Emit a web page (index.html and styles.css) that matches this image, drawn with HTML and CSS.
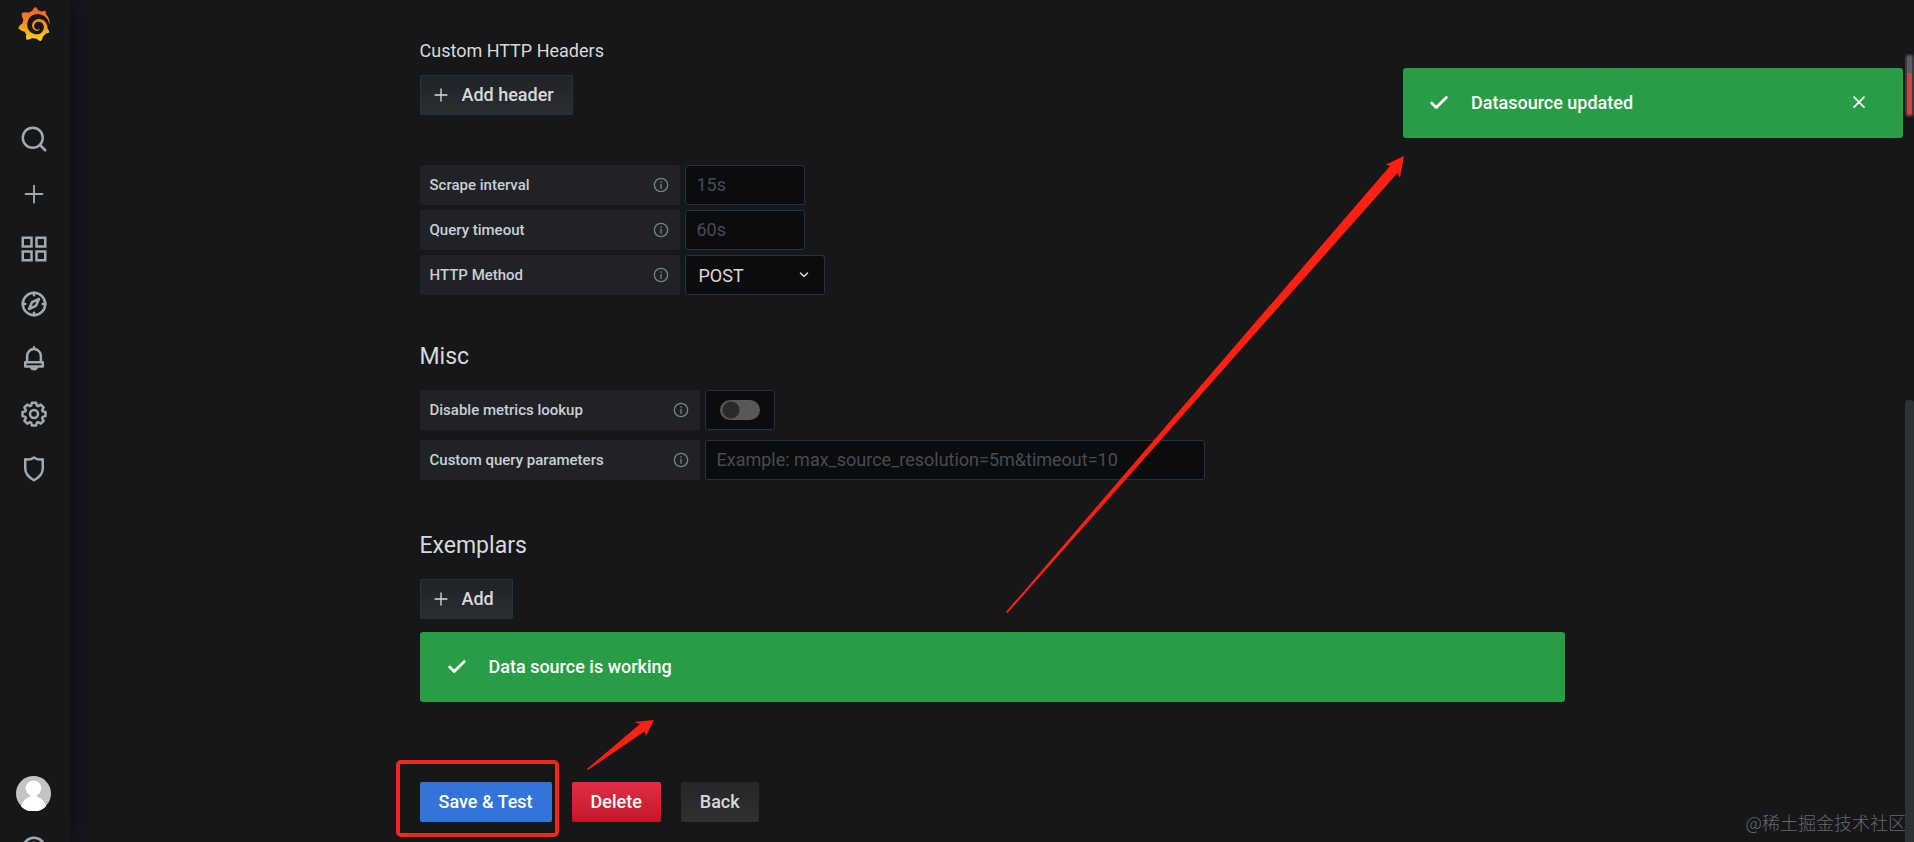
FILE: index.html
```html
<!DOCTYPE html>
<html lang="en">
<head>
  <meta charset="UTF-8" />
  <meta name="viewport" content="width=device-width, initial-scale=1.0"/>
  <title>Data Sources - Grafana</title>
  <link rel="stylesheet" href="styles.css">
</head>
<body>
  <!-- Shared icons -->
  <svg class="sprite" aria-hidden="true">
    <symbol id="plus" viewBox="0 0 24 24"><path d="M12 3v18M3 12h18"/></symbol>
    <symbol id="info" viewBox="0 0 24 24"><circle cx="12" cy="12" r="10"/><path d="M12 11v6M12 7v1"/></symbol>
    <symbol id="check" viewBox="0 0 24 24"><path d="M4 12l5 5L20 6"/></symbol>
    <symbol id="close" viewBox="0 0 24 24"><path d="M6 5l12 12M18 5L6 17"/></symbol>
  </svg>

  <nav class="sidemenu">
    <a href="#" class="logo" aria-label="Home">
      <svg viewBox="0 0 24 24">
        <defs>
          <linearGradient id="flame" x1="0" y1="1" x2="0" y2="0">
            <stop offset="0" stop-color="#fcd21f"/>
            <stop offset="0.35" stop-color="#fba41c"/>
            <stop offset="1" stop-color="#f05a28"/>
          </linearGradient>
        </defs>
        <path fill="url(#flame)" d="M23.02 10.59a8.578 8.578 0 0 0-.862-3.034 8.911 8.911 0 0 0-1.789-2.445c.337-1.342-.413-2.505-.413-2.505-1.292-.08-2.113.4-2.416.62-.052-.02-.102-.044-.154-.064-.22-.089-.446-.172-.677-.247-.231-.073-.47-.14-.711-.197a9.867 9.867 0 0 0-.875-.161C14.557.753 12.94 0 12.94 0c-1.804 1.145-2.147 2.744-2.147 2.744l-.018.093c-.098.029-.2.057-.298.088-.138.042-.275.094-.413.143-.138.055-.275.107-.41.166a8.869 8.869 0 0 0-1.557.87l-.063-.029c-2.497-.955-4.716.195-4.716.195-.203 2.658.996 4.33 1.235 4.636a11.608 11.608 0 0 0-.607 2.635C1.636 12.684 1 15.014 1 15.014c1.926 2.214 4.171 2.351 4.171 2.351.003-.002.006-.002.006-.005.285.509.615.994.986 1.446.156.19.32.371.488.548-.704 2.009.099 3.68.099 3.68 2.144.08 3.553-.937 3.849-1.173a9.784 9.784 0 0 0 3.164.501h.08l.055-.003.107-.002.103-.005.003.002c1.01 1.44 2.788 1.646 2.788 1.646 1.264-1.332 1.337-2.653 1.337-2.94v-.058c0-.02-.003-.039-.003-.06.265-.187.52-.387.758-.6a7.875 7.875 0 0 0 1.415-1.7c1.43.083 2.437-.885 2.437-.885-.236-1.49-1.085-2.216-1.264-2.354l-.018-.013-.016-.013a.217.217 0 0 1-.031-.02c.008-.092.016-.18.02-.27.011-.162.016-.323.016-.48v-.253l-.005-.098-.008-.135a1.891 1.891 0 0 0-.01-.13c-.003-.042-.008-.083-.013-.125l-.016-.124-.018-.122a6.215 6.215 0 0 0-2.032-3.73 6.015 6.015 0 0 0-3.222-1.46 6.292 6.292 0 0 0-.85-.048l-.107.002h-.063l-.044.003-.104.008a4.777 4.777 0 0 0-3.335 1.695c-.332.4-.592.84-.768 1.297a4.594 4.594 0 0 0-.312 1.817l.003.091c.005.055.007.11.013.164a3.615 3.615 0 0 0 .698 1.82 3.53 3.53 0 0 0 1.827 1.282c.33.098.66.14.971.137.039 0 .078 0 .114-.002l.063-.003c.02 0 .041-.003.062-.003.034-.002.065-.007.099-.01.007 0 .018-.003.028-.003l.031-.005.06-.008a1.18 1.18 0 0 0 .112-.02c.036-.008.072-.013.109-.024a2.634 2.634 0 0 0 .914-.415c.028-.02.056-.041.085-.065a.248.248 0 0 0 .039-.35.244.244 0 0 0-.309-.06l-.078.042c-.09.044-.184.083-.283.116a2.476 2.476 0 0 1-.475.096c-.028.003-.054.006-.083.006l-.083.002c-.026 0-.054 0-.08-.002l-.102-.006h-.012l-.024.006c-.016-.003-.031-.003-.044-.006-.031-.002-.06-.007-.091-.01a2.59 2.59 0 0 1-.724-.213 2.557 2.557 0 0 1-.667-.438 2.52 2.52 0 0 1-.805-1.475 2.306 2.306 0 0 1-.029-.444l.006-.122v-.023l.002-.031c.003-.021.003-.04.005-.06a3.163 3.163 0 0 1 1.352-2.29 3.12 3.12 0 0 1 .937-.43 2.946 2.946 0 0 1 .776-.101h.06l.07.002.045.003h.026l.07.005a4.041 4.041 0 0 1 1.635.49 3.94 3.94 0 0 1 1.602 1.662 3.77 3.77 0 0 1 .397 1.414l.005.076.003.075c.002.026.002.05.002.075 0 .024.003.052 0 .07v.065l-.002.073-.008.174a6.195 6.195 0 0 1-.08.639 5.1 5.1 0 0 1-.267.927 5.31 5.31 0 0 1-.624 1.13 5.052 5.052 0 0 1-3.237 2.014 4.82 4.82 0 0 1-.649.066l-.039.003h-.287a6.607 6.607 0 0 1-1.716-.265 6.776 6.776 0 0 1-3.4-2.274 6.75 6.75 0 0 1-.746-1.15 6.616 6.616 0 0 1-.714-2.596l-.005-.083-.002-.02v-.056l-.003-.073v-.096l-.003-.104v-.07l.003-.163c.008-.22.026-.45.054-.678a8.707 8.707 0 0 1 .28-1.355c.128-.444.286-.872.473-1.277a7.04 7.04 0 0 1 1.456-2.1 5.925 5.925 0 0 1 .953-.763c.169-.111.343-.213.524-.306.089-.05.182-.091.273-.135.047-.02.093-.042.138-.062a7.177 7.177 0 0 1 .714-.267l.145-.045c.049-.015.098-.026.148-.041.098-.029.197-.052.296-.076.049-.013.1-.02.15-.033l.15-.032.151-.028.076-.013.075-.01.153-.024c.057-.01.114-.013.171-.023l.169-.021c.036-.003.073-.008.106-.01l.073-.008.036-.003.042-.002c.057-.003.114-.008.171-.01l.086-.006h.023l.037-.003.145-.007a7.999 7.999 0 0 1 1.708.125 7.917 7.917 0 0 1 2.048.68 8.253 8.253 0 0 1 1.672 1.09l.09.077.089.078c.06.052.114.107.171.159.057.052.112.106.166.16.052.055.107.107.159.164a8.671 8.671 0 0 1 1.41 1.978c.012.026.028.052.04.078l.04.078.075.156c.023.051.05.1.07.153l.065.15a8.848 8.848 0 0 1 .45 1.34.19.19 0 0 0 .201.142.186.186 0 0 0 .172-.184c.01-.246.002-.532-.024-.856z"/>
      </svg>
    </a>
    <div class="menu-top">
      <a href="#" aria-label="Search"><svg class="icon" viewBox="0 0 24 24"><circle cx="11" cy="11" r="8"/><path d="M17 17l4 4"/></svg></a>
      <a href="#" aria-label="Create"><svg class="icon" viewBox="0 0 24 24"><path d="M12 3v18M3 12h18" transform="translate(3 3) scale(.75)"/></svg></a>
      <a href="#" aria-label="Dashboards"><svg class="icon square" viewBox="0 0 24 24"><path d="M3 3h7v7H3zM14 3h7v7h-7zM3 14h7v7H3zM14 14h7v7h-7z"/></svg></a>
      <a href="#" aria-label="Explore"><svg class="icon" viewBox="0 0 24 24"><circle cx="12" cy="12" r="9"/><path d="M12 3v2M12 19v2M3 12h2M19 12h2M16 8l-2.500 5.500L8 16l2.500-5.500z"/></svg></a>
      <a href="#" aria-label="Alerting"><svg class="icon" viewBox="0 0 24 24"><path d="M12 2.500V4M6.500 14V9.500a5.500 5.500 0 0 1 11 0V14M5 14.500h14v3.500H5zM9.500 18.500a2.700 2.700 0 0 0 5 0"/></svg></a>
      <a href="#" aria-label="Configuration"><svg class="icon" viewBox="0 0 24 24"><circle cx="12" cy="12" r="3.200"/><path d="M10.300 3h3.400l.6 2.300 1 .4 2.100-1.200 2.300 2.300-1.200 2.100.4 1 2.300.5v3.300l-2.300.6-.4 1 1.200 2.100-2.300 2.300-2.100-1.200-1 .4-.6 2.300h-3.400l-.6-2.300-1-.4-2.100 1.200-2.300-2.300 1.200-2.100-.4-1-2.300-.6v-3.300l2.300-.5.4-1-1.200-2.100 2.300-2.300 2.100 1.200 1-.4z"/></svg></a>
      <a href="#" aria-label="Server Admin"><svg class="icon" viewBox="0 0 24 24"><path d="M12 2.800q-3.300 2.400-7 1.400v7.600q0 5.200 7 9.200 7-4 7-9.200V4.200q-3.700 1-7-1.400z"/></svg></a>
    </div>
    <div class="menu-bottom">
      <a href="#" aria-label="Profile">
        <svg class="avatar" viewBox="0 0 36 36">
          <circle cx="18" cy="18" r="18" fill="#c4c4c4"/>
          <path fill="#fff" d="M5 31q3-8 9-9.500c1-.5 1-1 0-2a8 8 0 1 1 8 0c-1 1-1 1.500 0 2q6 1.500 9 9.500a18 18 0 0 1-26 0z"/>
        </svg>
      </a>
      <a href="#" aria-label="Help"><svg class="icon" viewBox="0 0 24 24"><circle cx="12" cy="12" r="9"/><path d="M9.500 9.500a2.500 2.500 0 1 1 3.500 2.300q-1 .5-1 1.700M12 16v1"/></svg></a>
    </div>
  </nav>

  <main class="page">
    <form class="settings" onsubmit="return false">
      <section class="headers">
        <h6>Custom HTTP Headers</h6>
        <button type="button" class="btn secondary"><svg class="icon"><use href="#plus"/></svg>Add header</button>
      </section>

      <section class="http">
        <div class="field">
          <label for="scrape">Scrape interval <svg class="icon"><use href="#info"/></svg></label>
          <input id="scrape" type="text" class="short" placeholder="15s" />
        </div>
        <div class="field">
          <label for="timeout">Query timeout <svg class="icon"><use href="#info"/></svg></label>
          <input id="timeout" type="text" class="short" placeholder="60s" />
        </div>
        <div class="field">
          <label for="method">HTTP Method <svg class="icon"><use href="#info"/></svg></label>
          <div class="select">
            <select id="method">
              <option>POST</option>
              <option>GET</option>
            </select>
            <svg class="icon" viewBox="0 0 24 24"><path d="M5 8l7 7 7-7"/></svg>
          </div>
        </div>
      </section>

      <section class="misc">
        <h3>Misc</h3>
        <div class="field">
          <label for="lookup">Disable metrics lookup <svg class="icon"><use href="#info"/></svg></label>
          <div class="switch"><input id="lookup" type="checkbox" /></div>
        </div>
        <div class="field">
          <label for="params">Custom query parameters <svg class="icon"><use href="#info"/></svg></label>
          <input id="params" type="text" class="long" placeholder="Example: max_source_resolution=5m&amp;timeout=10" />
        </div>
      </section>

      <section class="exemplars">
        <h3>Exemplars</h3>
        <button type="button" class="btn secondary"><svg class="icon"><use href="#plus"/></svg>Add</button>
      </section>

      <div class="alert">
        <svg class="icon"><use href="#check"/></svg>
        <span>Data source is working</span>
      </div>

      <div class="actions">
        <div class="marked"><button type="submit" class="btn primary">Save &amp; Test</button></div>
        <button type="button" class="btn danger">Delete</button>
        <button type="button" class="btn back">Back</button>
      </div>
    </form>
  </main>

  <div class="alert toast" role="status">
    <svg class="icon"><use href="#check"/></svg>
    <span>Datasource updated</span>
    <button type="button" aria-label="Close"><svg class="icon"><use href="#close"/></svg></button>
  </div>

  <!-- Scroll thumbs -->
  <div class="thumb"></div>
  <div class="mini-thumb"></div>

  <!-- Arrows -->
  <svg class="arrow arrow-toast" viewBox="0 0 400 458"><path d="M0 456L384 10 380 8.500 398 0 394 22 391.500 17 1.500 457z"/></svg>
  <svg class="arrow arrow-alert" viewBox="0 0 68 50"><path d="M0 49L53 4 47 2 67 0 59 16 57.500 11.500 1 50z"/></svg>

  <div class="watermark">@稀土掘金技术社区</div>
</body>
</html>
```
FILE: styles.css
```css
* {
  box-sizing: border-box;
}

body {
  margin: 0;
  height: 100vh;
  display: flex;
  position: relative;
  overflow: hidden;
  background: #161719;
  color: #d8d9da;
  font-family: Roboto, "Noto Sans CJK SC", sans-serif;
  font-size: 18px;
  line-height: 24px;
}

input, button, select {
  font: inherit;
  color: inherit;
}

.sprite {
  position: absolute;
  width: 0;
  height: 0;
}

.icon {
  flex-shrink: 0;
  fill: none;
  stroke: currentColor;
  stroke-width: 2;
  stroke-linecap: round;
  stroke-linejoin: round;
}

.icon.square {
  stroke-linejoin: miter;
}

/* Side menu */
.sidemenu {
  flex: 0 0 70px;
  height: 100vh;
  display: flex;
  flex-direction: column;
  align-items: center;
  padding-right: 3px;
  background: #161719;
  box-shadow: 0 0 20px #0b0c0e;
}

.sidemenu a {
  display: flex;
  align-items: center;
  justify-content: center;
  width: 67px;
  height: 55px;
  color: #a5a8ac;
}

.sidemenu .icon {
  width: 30px;
  height: 30px;
}

.sidemenu .logo {
  height: 48px;
}

.logo svg {
  width: 34px;
  height: 34px;
}

.menu-top {
  margin-top: 63px;
}

.menu-bottom {
  margin-top: auto;
  margin-bottom: -34px;
}

.avatar {
  width: 35px;
  height: 35px;
}

/* Settings form */
.page {
  flex: 1;
  min-width: 0;
  padding: 39px 40px 0;
}

.settings {
  max-width: 1145px;
  margin: 0 auto;
}

h3, h6 {
  margin: 0;
  font-weight: 400;
}

h6 {
  font-size: 18px;
  line-height: 24px;
  margin-bottom: 12px;
}

h3 {
  font-size: 23px;
  line-height: 28px;
  margin-bottom: 19px;
}

.headers {
  margin-bottom: 50px;
}

.http {
  margin-bottom: 48px;
}

.misc {
  margin-bottom: 52px;
}

.exemplars {
  margin-bottom: 13px;
}

.field {
  display: flex;
  gap: 5px;
  margin-bottom: 5px;
}

.misc .field {
  margin-bottom: 10px;
}

.field label {
  display: flex;
  align-items: center;
  justify-content: space-between;
  width: 260px;
  height: 40px;
  padding: 0 11px 0 10px;
  border-radius: 2px;
  background: #202226;
  color: #c7d0d9;
  font-size: 15px;
  font-weight: 500;
}

.misc .field label {
  width: 280px;
}

label .icon {
  width: 16px;
  height: 16px;
  color: #7b8087;
}

input[type="text"], select, .switch {
  height: 40px;
  border: 1px solid #2c3235;
  border-radius: 3px;
  background: #0b0c0e;
}

input[type="text"] {
  min-width: 0;
  padding: 0 11px 2px;
}

input::placeholder {
  color: #464c54;
  opacity: 1;
}

.short {
  width: 120px;
}

.long {
  width: 500px;
}

.select {
  display: grid;
  align-items: center;
  width: 140px;
}

.select > * {
  grid-area: 1 / 1;
}

select {
  appearance: none;
  width: 100%;
  padding: 2px 13px 0;
}

.select .icon {
  justify-self: end;
  width: 12px;
  height: 12px;
  margin-right: 15px;
  stroke-width: 3;
  pointer-events: none;
}

.switch {
  display: flex;
  align-items: center;
  justify-content: center;
  width: 70px;
}

.switch input {
  appearance: none;
  width: 40px;
  height: 20px;
  margin: 0;
  border-radius: 10px;
  background: radial-gradient(circle at 11px 10px, #2a2a2a 8px, #585858 9px);
}

/* Buttons */
.btn {
  display: flex;
  align-items: center;
  height: 40px;
  padding: 0 19px;
  border: 0;
  border-radius: 2px;
  color: #fff;
  font-weight: 500;
  white-space: nowrap;
  cursor: pointer;
}

.btn .icon {
  width: 16px;
  height: 16px;
  margin-right: 13px;
}

.secondary {
  padding: 0 18px 0 12px;
  border: 1px solid #2c3235;
  background: linear-gradient(#202226, #2a2e32);
  color: #d8d9da;
}

.primary {
  background: #3274d9;
}

.danger {
  background: linear-gradient(#e02f44, #c4162a);
}

.back {
  background: linear-gradient(#262628, #303032);
  color: #d8d9da;
}

.actions {
  display: flex;
  gap: 20px;
  margin-top: 80px;
}

.marked {
  position: relative;
}

.marked::before {
  content: "";
  position: absolute;
  inset: -22px -7px -15px -24px;
  border: 4px solid #f5261b;
  border-radius: 5px;
  pointer-events: none;
}

/* Alerts */
.alert {
  display: flex;
  align-items: center;
  gap: 21px;
  height: 70px;
  padding: 0 26px;
  border-radius: 3px;
  background: #299c46;
  color: #fff;
  font-weight: 500;
}

.alert .icon {
  width: 22px;
  height: 22px;
  stroke-width: 3;
}

.toast {
  position: absolute;
  top: 68px;
  right: 11px;
  width: 500px;
  padding: 0 25px;
}

.toast button {
  display: flex;
  margin-left: auto;
  padding: 0;
  border: 0;
  background: none;
  cursor: pointer;
}

.toast button .icon {
  width: 20px;
  height: 20px;
  margin-right: 9px;
  stroke-width: 2;
}

.thumb {
  position: absolute;
  top: 400px;
  right: 0;
  bottom: 0;
  width: 9px;
  border-radius: 3px 3px 0 0;
  background: #2c3235;
}

.mini-thumb {
  position: absolute;
  top: 54px;
  right: 0;
  width: 9px;
  height: 63px;
  border: 2px solid #3a3c3f;
  border-radius: 4px;
  background: linear-gradient(#5c5d5f 17px, #e0393e 17px);
}

.arrow {
  position: absolute;
  fill: #ff2012;
  pointer-events: none;
}

.arrow-toast {
  top: 156px;
  left: 1006px;
  width: 400px;
  height: 458px;
}

.arrow-alert {
  top: 720px;
  left: 587px;
  width: 68px;
  height: 50px;
}

.watermark {
  position: absolute;
  right: 8px;
  bottom: 8px;
  color: #66686a;
  font-family: "Noto Sans CJK SC", sans-serif;
  font-weight: 300;
}
```
